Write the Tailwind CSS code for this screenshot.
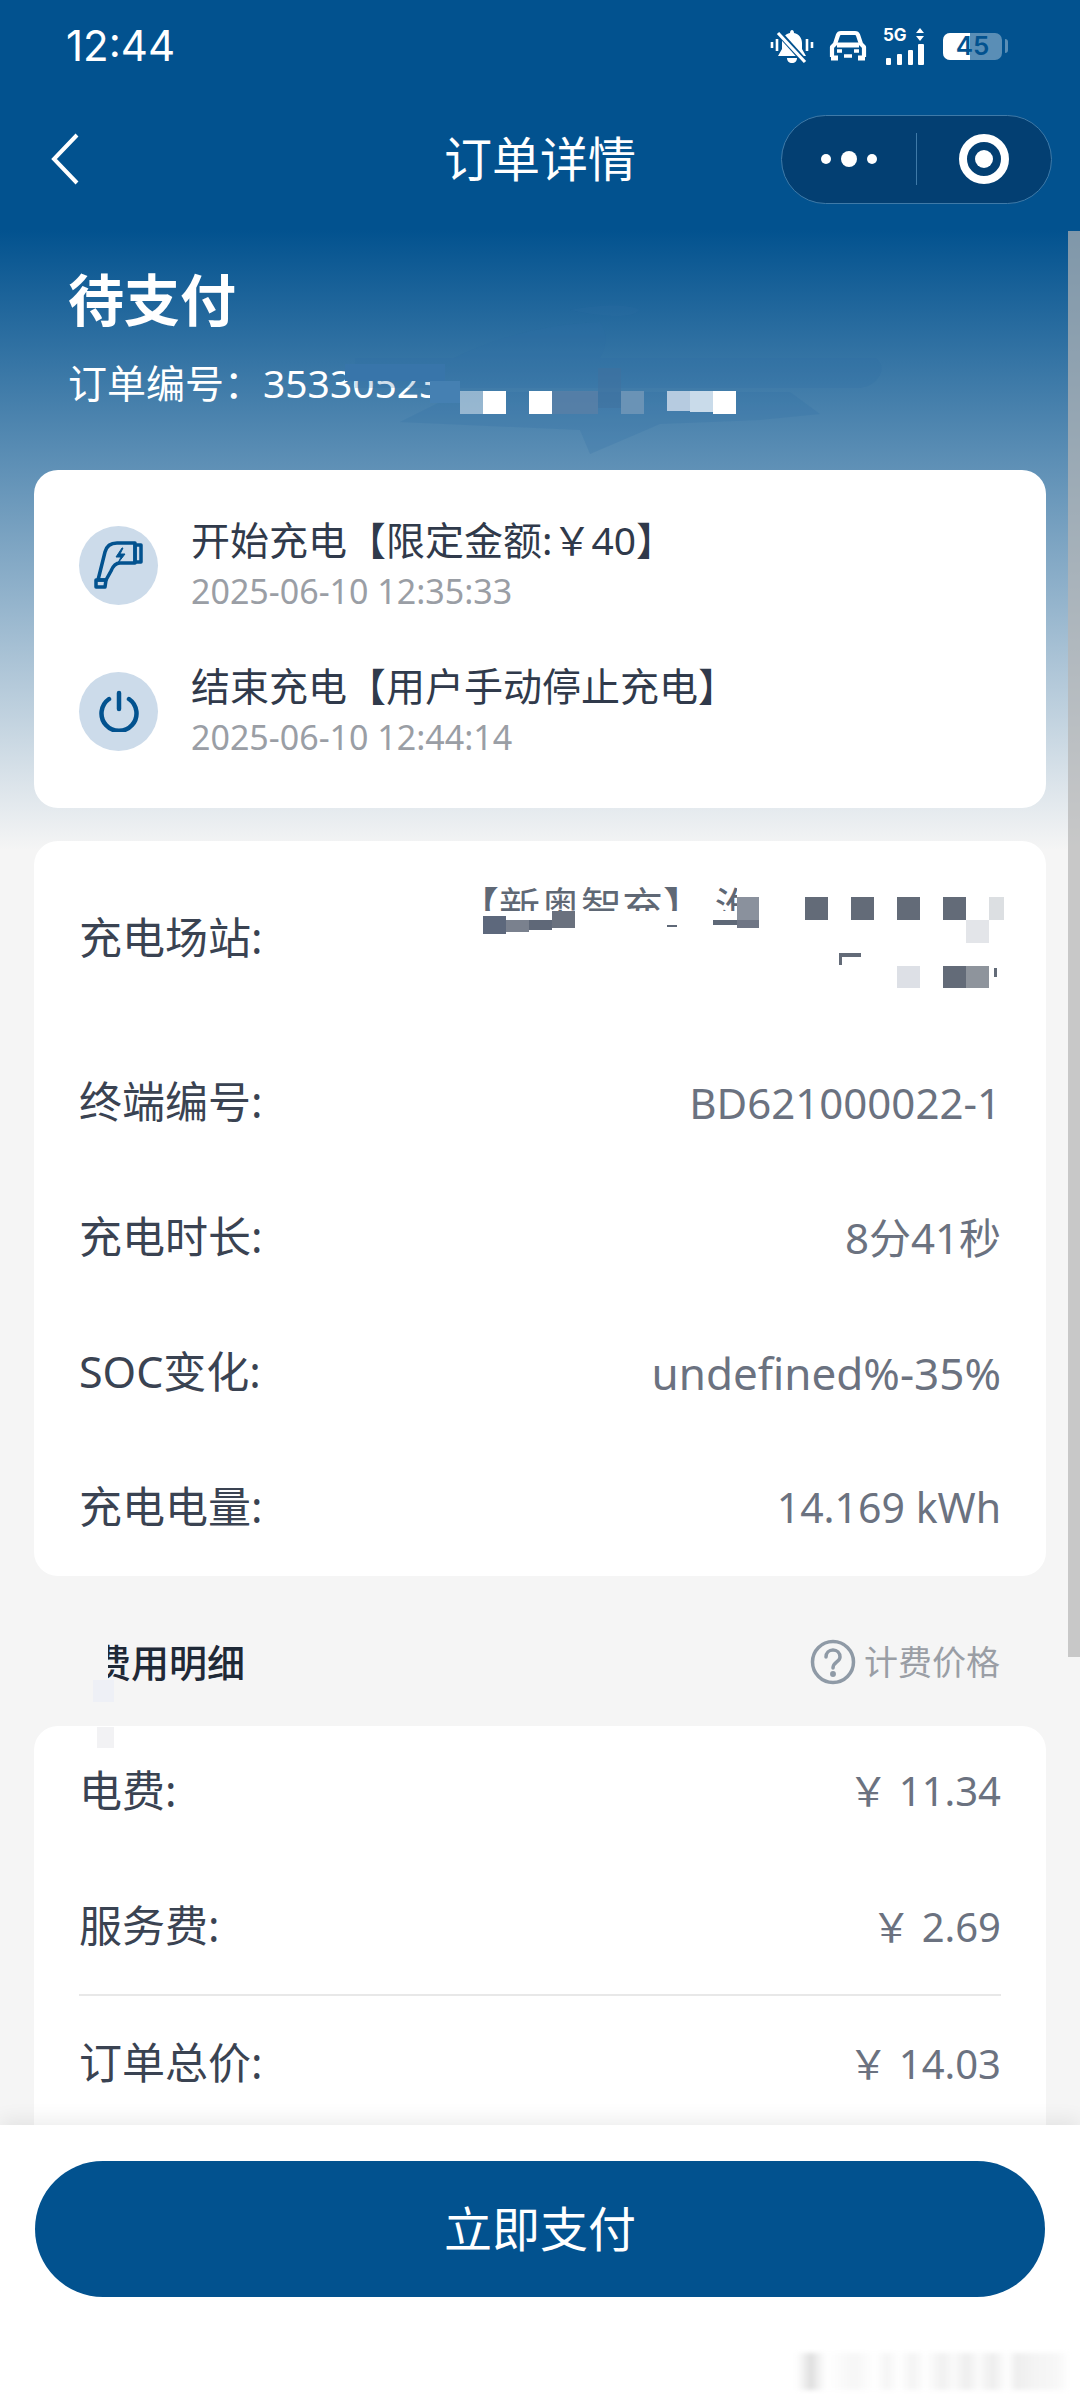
<!DOCTYPE html>
<html lang="zh-CN">
<head>
    <meta charset="UTF-8">
    <meta name="viewport" content="width=device-width, initial-scale=1.0">
    <title>订单详情</title>
    <script src="https://cdn.jsdelivr.net/npm/@tailwindcss/browser@4"></script>
</head>
<body class="bg-[#f5f5f5]">
<div class="relative w-[1080px] h-[2400px] overflow-hidden font-['Noto_Sans','Noto_Sans_CJK_SC',sans-serif] bg-[linear-gradient(180deg,#02528f_0px,#02528f_230px,#f5f5f5_850px)]">

    <!-- Status bar -->
    <div class="h-[92px] pl-[66px] pr-[72px] flex items-center justify-between text-white">
        <span class="text-[42px] leading-none font-['Inter',sans-serif]">12:44</span>
        <div class="flex items-center">
            <svg class="w-[44px] h-[36px]" viewBox="0 0 44 36" fill="none">
                <path d="M22 2c1 0 2 1 2 3 5 1 8 5 8 10v6l4 7H8l4-7v-6c0-5 3-9 8-10 0-2 1-3 2-3z" fill="#fff"/>
                <path d="M17 30h10c0 3-2 5-5 5s-5-2-5-5z" fill="#fff"/>
                <path d="M9 5l27 30" stroke="#02528f" stroke-width="6"/>
                <path d="M8 5l27 29" stroke="#fff" stroke-width="3.2"/>
                <path d="M2 14v6M7 11v12M37 11v12M42 14v6" stroke="#fff" stroke-width="2.6"/>
            </svg>
            <svg class="ml-[15px] w-[38px] h-[32px]" viewBox="0 0 38 32" fill="none">
                <path d="M3 27V17l3-3 3-9c.5-1.500 1.500-2 3-2h14c1.500 0 2.500.5 3 2l3 9 3 3v10" stroke="#fff" stroke-width="4.200" stroke-linejoin="round"/>
                <path d="M2 28h7M29 28h7M8 15h22" stroke="#fff" stroke-width="5"/>
                <path d="M8 21h5M25 21h5M15 26h8" stroke="#fff" stroke-width="3.500"/>
            </svg>
            <div class="ml-[16px] w-[44px] h-[37px] relative">
                <span class="absolute left-0 top-[-3px] text-[17px] leading-[20px] font-bold text-white font-['Inter',sans-serif]">5G</span>
                <svg class="absolute inset-0 w-[44px] h-[37px]" viewBox="0 0 44 37" fill="#fff">
                    <path d="M33 5l4-5 4 5zM33 8h8l-4 5z"/>
                    <rect x="3" y="30" width="5" height="7" rx="1"/>
                    <rect x="14" y="26" width="5" height="11" rx="1"/>
                    <rect x="25" y="22" width="5" height="15" rx="1"/>
                    <rect x="35" y="16" width="6" height="21" rx="1"/>
                </svg>
            </div>
            <div class="ml-[16px] relative w-[59px] h-[27px] rounded-[7px] bg-white/35">
                <div class="absolute left-0 top-0 h-full w-[27px] rounded-l-[7px] bg-white"></div>
                <span class="absolute inset-0 flex items-center justify-center text-[26px] leading-none font-semibold text-[#02528f] font-['Inter',sans-serif]">45</span>
            </div>
            <div class="ml-[3px] w-[3px] h-[14px] rounded-r bg-white/35"></div>
        </div>
    </div>

    <!-- Nav bar -->
    <div class="h-[134px] grid grid-cols-[299px_auto_299px] justify-between items-center">
        <svg class="ml-[50px] w-[30px] h-[52px]" viewBox="0 0 30 52" fill="none">
            <path d="M27 2L4 26l23 24" stroke="#fff" stroke-width="4"/>
        </svg>
        <h1 class="text-[48px] leading-none text-white">订单详情</h1>
        <div class="w-[271px] h-[89px] rounded-full bg-[#033f72] border border-[#3f7aa8] flex items-center">
            <div class="w-[134px] flex items-center justify-center gap-[10px]">
                <span class="w-[10px] h-[10px] rounded-full bg-white"></span>
                <span class="w-[16px] h-[16px] rounded-full bg-white"></span>
                <span class="w-[10px] h-[10px] rounded-full bg-white"></span>
            </div>
            <div class="w-px h-[52px] bg-[#3f7aa8]"></div>
            <div class="flex-1 flex items-center justify-center">
                <div class="w-[50px] h-[50px] rounded-full border-[8px] border-white flex items-center justify-center">
                    <span class="w-[18px] h-[18px] rounded-full bg-white"></span>
                </div>
            </div>
        </div>
    </div>

    <!-- Order status -->
    <div class="h-[244px] pl-[68px] text-white">
        <p class="pt-[43px] h-[103px] text-[56px] leading-[60px] font-bold">待支付</p>
        <p class="mt-[29px] text-[39px] leading-[50px] whitespace-nowrap">订单编号：35330523</p>
    </div>

    <!-- Charge timeline -->
    <div class="mx-[34px] w-[1012px] h-[338px] rounded-[24px] bg-white pt-[45px] pl-[45px] flex flex-col gap-[46px]">
        <div class="h-[100px] flex items-center gap-[33px]">
            <div class="w-[79px] h-[79px] rounded-full bg-[#ccdbea] flex items-center justify-center">
                <svg class="w-[50px] h-[50px]" viewBox="0 0 50 50" fill="none" stroke="#02528f" stroke-width="3.500" stroke-linejoin="round">
                    <path d="M41 3H23C15 3 12 8 11 12L4 40h8l5-9c2-5 5-8 9-8h15z"/>
                    <path d="M41 5h6v17h-6z"/>
                    <path d="M2 40h10l-1 7H2z"/>
                    <path d="M28 8l-6 9h5l-3 6 7-9h-5l3-6z" fill="#02528f" stroke-width="1"/>
                </svg>
            </div>
            <div>
                <p class="text-[39px] leading-[50px] text-[#303a4b]">开始充电【限定金额:￥40】</p>
                <p class="mt-[1px] text-[34px] leading-[50px] text-[#9a9ea5]">2025-06-10 12:35:33</p>
            </div>
        </div>
        <div class="h-[100px] flex items-center gap-[33px]">
            <div class="w-[79px] h-[79px] rounded-full bg-[#ccdbea] flex items-center justify-center">
                <svg class="w-[42px] h-[42px]" viewBox="0 0 42 42" fill="none" stroke="#02528f" stroke-width="4.500" stroke-linecap="round">
                    <path d="M21 3v16"/>
                    <path d="M11 9a17.500 17.500 0 1 0 20 0"/>
                </svg>
            </div>
            <div>
                <p class="text-[39px] leading-[50px] text-[#303a4b]">结束充电【用户手动停止充电】</p>
                <p class="mt-[1px] text-[34px] leading-[50px] text-[#9a9ea5]">2025-06-10 12:44:14</p>
            </div>
        </div>
    </div>

    <!-- Order info -->
    <div class="mt-[33px] mx-[34px] w-[1012px] rounded-[24px] bg-white px-[45px] pb-[1px] text-[43px] text-[#3a4352]">
        <div class="h-[194px] flex items-center justify-between">
            <span>充电场站:</span>
            <div class="self-start mt-[40px] w-[543px] text-[41px] leading-[50px] text-[#5f6875] whitespace-nowrap">【新奥智充】 淮</div>
        </div>
        <div class="h-[135px] flex items-center justify-between"><span>终端编号:</span><span class="text-[42px] text-[#6b7280]">BD621000022-1</span></div>
        <div class="h-[135px] flex items-center justify-between"><span>充电时长:</span><span class="text-[42px] text-[#6b7280]">8分41秒</span></div>
        <div class="h-[135px] flex items-center justify-between"><span>SOC变化:</span><span class="text-[44px] text-[#6b7280]">undefined%-35%</span></div>
        <div class="h-[135px] flex items-center justify-between"><span>充电电量:</span><span class="text-[41px] text-[#6b7280]">14.169 kWh</span></div>
    </div>

    <!-- Fee heading -->
    <div class="h-[150px] pl-[93px] pr-[80px] pt-[61px] flex items-start justify-between">
        <span class="text-[38px] leading-[50px] font-medium text-[#1f2937]">费用明细</span>
        <div class="flex items-center gap-[8px] text-[34px] leading-[50px] text-[#9a9ea5]">
            <svg class="w-[46px] h-[46px]" viewBox="0 0 46 46" fill="none" stroke="#8f9aa6" stroke-width="3.500">
                <circle cx="23" cy="23" r="20.500"/>
                <path d="M16 18c0-4 3-7 7-7s7 3 7 7c0 5-7 5-7 11" stroke-linecap="round"/>
                <circle cx="23" cy="35" r="1.200" fill="#8f9aa6"/>
            </svg>
            <span>计费价格</span>
        </div>
    </div>

    <!-- Fee card, runs under the bottom bar -->
    <div class="mx-[34px] w-[1012px] h-[500px] rounded-[24px] bg-white px-[45px] text-[43px] text-[#3a4352]">
        <div class="h-[130px] flex items-center justify-between"><span>电费:</span><span class="text-[40px] text-[#6b7280]">￥ 11.34</span></div>
        <div class="mt-[3px] h-[135px] flex items-center justify-between"><span>服务费:</span><span class="text-[40px] text-[#6b7280]">￥ 2.69</span></div>
        <div class="h-[2px] bg-[#e8e8e8]"></div>
        <div class="h-[135px] flex items-center justify-between"><span>订单总价:</span><span class="text-[40px] text-[#6b7280]">￥ 14.03</span></div>
    </div>

    <!-- Scrollbar -->
    <div class="absolute right-0 top-[231px] w-[12px] h-[1426px] bg-[#b5b5b5]/70"></div>

    <!-- Smeared retouching over the order number -->
    <svg class="absolute left-[340px] top-[300px] w-[560px] h-[160px]" viewBox="0 0 560 160" fill="#2c6ea6" fill-opacity="0.22">
        <path d="M230 10c30-6 60-6 70 0-10 10-40 6-70 0zM110 60c40-20 90-36 150-38 10 14 4 30 0 36zM15 58h520c14 8 4 28-15 30H15z"/>
        <path d="M60 122l60-30h330l30 22-60 6-100 4-70 30-10-24z"/>
    </svg>
    <div class="absolute left-[345px] top-[364px] w-[100px] h-[17px] bg-[#3875aa]"></div>
    <div class="absolute left-[430px] top-[381px] w-[30px] h-[22px] bg-[#4580b2]"></div>

    <!-- Mosaic over the order number -->
    <div class="absolute left-[460px] top-[391px] w-[23px] h-[23px] bg-white/45"></div>
    <div class="absolute left-[483px] top-[391px] w-[23px] h-[23px] bg-white"></div>
    <div class="absolute left-[529px] top-[391px] w-[23px] h-[23px] bg-white"></div>
    <div class="absolute left-[552px] top-[391px] w-[46px] h-[23px] bg-[#5a7fa6]/80"></div>
    <div class="absolute left-[598px] top-[368px] w-[23px] h-[40px] bg-[#3f6f9e]/50"></div>
    <div class="absolute left-[621px] top-[391px] w-[23px] h-[23px] bg-[#6a93b6]"></div>
    <div class="absolute left-[667px] top-[391px] w-[23px] h-[20px] bg-[#b6cbe0]"></div>
    <div class="absolute left-[690px] top-[391px] w-[23px] h-[21px] bg-[#c9dbea]"></div>
    <div class="absolute left-[713px] top-[391px] w-[23px] h-[23px] bg-white"></div>

    <!-- Mosaic over the station name -->
    <div class="absolute left-[460px] top-[911px] w-[560px] h-[60px] bg-white"></div>
    <div class="absolute left-[483px] top-[916px] w-[23px] h-[18px] bg-[#5d687c]"></div>
    <div class="absolute left-[506px] top-[920px] w-[23px] h-[12px] bg-[#7a818e]"></div>
    <div class="absolute left-[529px] top-[920px] w-[23px] h-[10px] bg-[#5f6878]"></div>
    <div class="absolute left-[552px] top-[911px] w-[23px] h-[17px] bg-[#6a717e]"></div>
    <div class="absolute left-[667px] top-[925px] w-[10px] h-[2px] bg-[#5e6877]"></div>
    <div class="absolute left-[713px] top-[920px] w-[24px] h-[5px] bg-[#5e6877]"></div>
    <div class="absolute left-[737px] top-[897px] w-[22px] h-[23px] bg-[#8a919d]"></div>
    <div class="absolute left-[737px] top-[920px] w-[22px] h-[8px] bg-[#6f7685]"></div>
    <div class="absolute left-[737px] top-[886px] w-[46px] h-[11px] bg-white"></div>
    <div class="absolute left-[805px] top-[897px] w-[23px] h-[23px] bg-[#636b78]"></div>
    <div class="absolute left-[851px] top-[897px] w-[23px] h-[23px] bg-[#636b78]"></div>
    <div class="absolute left-[897px] top-[897px] w-[23px] h-[23px] bg-[#636b78]"></div>
    <div class="absolute left-[943px] top-[897px] w-[23px] h-[23px] bg-[#636b78]"></div>
    <div class="absolute left-[989px] top-[897px] w-[15px] h-[23px] bg-[#dcdfe2]"></div>
    <div class="absolute left-[966px] top-[920px] w-[23px] h-[23px] bg-[#e3e5e9]"></div>
    <div class="absolute left-[839px] top-[953px] w-[22px] h-[4px] bg-[#636b78]"></div>
    <div class="absolute left-[839px] top-[953px] w-[3px] h-[12px] bg-[#636b78]"></div>
    <div class="absolute left-[897px] top-[966px] w-[23px] h-[22px] bg-[#dde0e6]"></div>
    <div class="absolute left-[943px] top-[966px] w-[23px] h-[22px] bg-[#636b78]"></div>
    <div class="absolute left-[966px] top-[966px] w-[23px] h-[22px] bg-[#8e949c]"></div>
    <div class="absolute left-[994px] top-[968px] w-[3px] h-[9px] bg-[#636b78]"></div>

    <!-- Retouch over the fee heading -->
    <div class="absolute left-[88px] top-[1640px] w-[20px] h-[40px] bg-[#f5f5f5]"></div>
    <div class="absolute left-[93px] top-[1680px] w-[21px] h-[22px] bg-[#eef0f6]"></div>
    <div class="absolute left-[97px] top-[1727px] w-[17px] h-[21px] bg-[#f2f2f4]"></div>

    <!-- Bottom bar -->
    <div class="absolute left-0 right-0 top-[2125px] h-[275px] bg-white shadow-[0_-6px_18px_rgba(0,0,0,0.07)] pt-[36px] pl-[35px]">
        <button class="w-[1010px] h-[136px] rounded-full bg-[#02528f] text-white text-[48px] leading-none">立即支付</button>
    </div>

    <!-- Blurred stripes in the corner -->
    <div class="absolute left-[795px] top-[2353px] w-[275px] h-[37px] blur-[2px] bg-[linear-gradient(90deg,#ffffff_0px,#f8f8f8_5px,#dedede_16px,#f2f2f2_24px,#ffffff_32px,#f6f6f6_60px,#ffffff_80px,#f5f5f5_92px,#ffffff_104px,#f3f3f3_118px,#ffffff_130px,#f0f0f0_148px,#fafafa_158px,#eeeeee_172px,#fbfbfb_184px,#ededed_198px,#ffffff_212px,#eeeeee_222px,#f4f4f4_240px,#f7f7f7_262px,#ffffff_275px)]"></div>
</div>
</body>
</html>
